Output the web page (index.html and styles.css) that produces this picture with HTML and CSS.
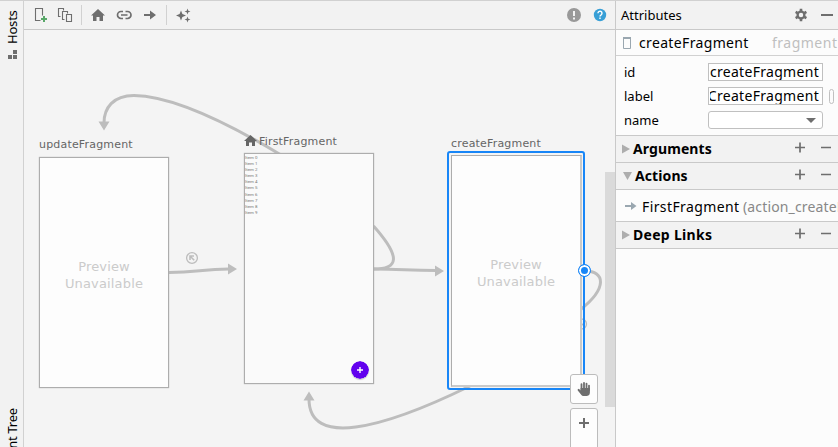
FILE: index.html
```html
<!DOCTYPE html>
<html lang="en">
<head>
<meta charset="utf-8">
<title>Navigation Editor</title>
<link rel="stylesheet" href="styles.css">
</head>
<body>
<div class="app">
  <aside class="rail">
    <div class="rail-tab hosts"><span>Hosts</span></div>
    <svg class="hosts-icon" width="9" height="9" viewBox="0 0 9 9"><path fill="#6e6e6e" d="M5 0h4v4H5zM0 5h4v4H0zM5 5h4v4H5z"/></svg>
    <div class="rail-tab tree"><span>Component Tree</span></div>
  </aside>

  <main class="editor">
    <div class="toolbar">
      <svg width="170" height="28" viewBox="24 1 170 28">
        <g fill="none" stroke="#6e6e6e" stroke-width="1.1">
          <path d="M40.500 20.500h-5v-12h7v7"/>
          <path d="M60.500 16.500h-2v-8h5v2"/>
          <path d="M64.500 19.500h-2v-8h5v2"/>
          <path d="M66.500 14.500h5v7h-5z"/>
        </g>
        <path stroke="#59a869" stroke-width="2" d="M41 19h6M44 16v6"/>
        <path stroke="#d1d1d1" d="M81.500 5v20M166.500 5v20"/>
        <path fill="#6e6e6e" d="M98 9l7 6.500h-2V21h-3.500v-4h-3v4H93v-5.500h-2z"/>
        <g fill="none" stroke="#6e6e6e" stroke-width="1.700">
          <path d="M123 11.500h-2a3.500 3.500 0 0 0 0 7h2M125.500 11.500h2a3.500 3.500 0 0 1 0 7h-2M121 15h6.500"/>
        </g>
        <path fill="#6e6e6e" d="M144 14h6v-3.500l6 4.500-6 4.500V16h-6z"/>
        <path fill="#6e6e6e" d="M181 10.500l1.400 3.600 3.600 1.400-3.600 1.400-1.400 3.600-1.400-3.600-3.600-1.400 3.600-1.400zM187.500 8.500l.8 2.200 2.200.8-2.200.8-.8 2.200-.8-2.200-2.200-.8 2.200-.8zM187.500 16.500l.8 2.200 2.200.8-2.200.8-.8 2.200-.8-2.200-2.200-.8 2.200-.8z"/>
      </svg>
      <svg width="50" height="28" viewBox="565 1 50 28">
        <circle cx="574" cy="15" r="7" fill="#999"/><path fill="#f2f2f2" d="M573 11h2v5h-2zM573 17.500h2v2h-2z"/>
        <circle cx="600" cy="15" r="6.200" fill="#389fd6"/>
        <path fill="none" stroke="#fff" stroke-width="1.400" d="M598 13.300a2 2 0 1 1 3.200 1.500c-.8.500-1.200.8-1.200 1.700M600 17.600v1.500"/>
      </svg>
    </div>

    <div class="canvas">
      <svg class="edges" width="591" height="417" viewBox="24 30 591 417">
        <g fill="none" stroke="#bdbdbd" stroke-width="3">
          <path d="M281 155C213 114 166 96 134 95.500C113 95.500 104 108 104 123"/>
          <path d="M169 272.500C197 272.500 202 269 229 269"/>
          <path d="M374 269C401 269 408 270.500 436 270.500"/>
          <path d="M373.500 226C402 258 398 269 374 269"/>
          <path d="M470 386C380 430 309 447 309 399"/>
          <path d="M585 271C605 271 608 288 580 310"/>
        </g>
        <path fill="#bdbdbd" d="M98.500 121.500h11L104 130.500zM228 263.500v11l9-5.500zM435 265.500v11l9-5.500zM303.500 400.500h11L309 391.500z"/>
        <g fill="none" stroke="#bdbdbd" stroke-width="1.300">
          <circle cx="192" cy="258" r="5.400"/>
          <path stroke-width="1.600" d="M190 260v-4h4M190.200 256.200l4 4"/>
          <circle cx="581.500" cy="324" r="5"/><path d="M581 326l3-3"/>
        </g>
      </svg>

      <div class="node-label update-label">updateFragment</div>
      <div class="node update"><p>Preview<br>Unavailable</p></div>

      <div class="node-label first-label">
        <svg width="14" height="12" viewBox="0 0 14 12"><path fill="#656565" d="M6.500 0l6.500 6h-2v5H8V7.500H5V11H2V6H0z"/></svg><span>FirstFragment</span>
      </div>
      <div class="node first">
        <ul class="items"><li>Item 0</li><li>Item 1</li><li>Item 2</li><li>Item 3</li><li>Item 4</li><li>Item 5</li><li>Item 6</li><li>Item 7</li><li>Item 8</li><li>Item 9</li></ul>
        <svg class="fab" width="18" height="18" viewBox="0 0 18 18"><circle cx="9" cy="9" r="9" fill="#6200ee"/><path stroke="#fff" stroke-width="1.400" d="M6 9h6M9 6v6"/></svg>
      </div>

      <div class="node-label create-label">createFragment</div>
      <div class="selection"></div>
      <div class="node create"><p>Preview<br>Unavailable</p></div>
      <div class="handle"></div>

      <div class="scrollbar"></div>
      <div class="zoom-controls">
        <div class="pan"><svg width="16" height="16" viewBox="0 0 16 16"><path fill="none" stroke="#6e6e6e" stroke-width="1.800" stroke-linecap="round" d="M5.500 9V3.200M8 8V1.800M10.500 8V2.600M13 9V4.600M2.500 8.800l3.500 3.700"/><path fill="#6e6e6e" d="M4.600 7h9.300v4.500q0 3-3 3.500H7.500q-1.500 0-2.500-1.500L2 9.500l1-1.300 1.600 1.300z"/></svg></div>
        <div class="zoom-in"><svg width="10" height="10" viewBox="0 0 10 10"><path stroke="#6e6e6e" stroke-width="2" d="M0 5h10M5 0v10"/></svg></div>
      </div>
    </div>
  </main>

  <aside class="panel">
    <header class="panel-head">
      <span class="t-attributes">Attributes</span>
      <svg width="38" height="14" viewBox="795 8 38 14">
        <circle cx="801" cy="15" r="3.400" fill="none" stroke="#6e6e6e" stroke-width="2.300"/>
        <path stroke="#6e6e6e" stroke-width="2.600" d="M801 8.800v2.400M801 18.800v2.400M795.600 11.900l2.100 1.200M804.300 16.900l2.100 1.200M795.600 18.100l2.100-1.200M804.300 13.100l2.100-1.200"/>
        <path fill="#6e6e6e" d="M821 14h12v2h-12z"/>
      </svg>
    </header>
    <div class="component">
      <svg width="8" height="12" viewBox="0 0 8 12"><path fill="none" stroke="#9aa7b0" d="M.5.5h7v11h-7z"/><path fill="#9aa7b0" d="M0 0h8v2H0z"/></svg>
      <span class="t-component">createFragment</span><span class="t-kind">fragment</span>
    </div>
    <div class="fields">
      <div class="field"><span class="t-id">id</span><div class="input"><span>createFragment</span></div></div>
      <div class="field"><span class="t-label">label</span><div class="input capital"><span>CreateFragment</span></div><i class="pill"></i></div>
      <div class="field"><span class="t-name">name</span><div class="input combo"><svg width="10" height="5" viewBox="0 0 10 5"><path fill="#6e6e6e" d="M0 0h10L5 5z"/></svg></div></div>
    </div>
    <div class="section">
      <svg class="tri" width="11" height="10" viewBox="0 0 11 10"><path fill="#adadad" d="M0 .5v9L8 5z"/></svg>
      <b class="t-arguments">Arguments</b>
      <svg class="ops" width="38" height="11" viewBox="0 0 38 11"><path stroke="#6e6e6e" stroke-width="1.700" d="M0 5.500h10M5 .5v10M26 5.500h10"/></svg>
    </div>
    <div class="section">
      <svg class="tri" width="13" height="10" viewBox="0 0 13 10"><path fill="#adadad" d="M1 1h9L5.500 9z"/></svg>
      <b class="t-actions">Actions</b>
      <svg class="ops" width="38" height="11" viewBox="0 0 38 11"><path stroke="#6e6e6e" stroke-width="1.700" d="M0 5.500h10M5 .5v10M26 5.500h10"/></svg>
    </div>
    <div class="action">
      <svg width="12" height="8" viewBox="0 0 12 8"><path fill="#9aa7b0" d="M0 3h6V0l5.500 4L6 8V5H0z"/></svg>
      <span class="t-target">FirstFragment</span><span class="t-action">(action_createFragment_to_FirstFragment)</span>
    </div>
    <div class="section">
      <svg class="tri" width="11" height="10" viewBox="0 0 11 10"><path fill="#adadad" d="M0 .5v9L8 5z"/></svg>
      <b class="t-links">Deep Links</b>
      <svg class="ops" width="38" height="11" viewBox="0 0 38 11"><path stroke="#6e6e6e" stroke-width="1.700" d="M0 5.500h10M5 .5v10M26 5.500h10"/></svg>
    </div>
  </aside>
</div>
</body>
</html>
```
FILE: styles.css
```css
* { box-sizing: border-box; }
body { margin: 0; overflow: hidden; font-family: "Noto Sans", "Open Sans", sans-serif; font-size: 13px; color: #000; }
svg { display: block; flex: none; }
.app { display: grid; grid-template-columns: 24px 591px 223px; width: 838px; height: 447px; border-top: 1px solid #d1d1d1; overflow: hidden; }

.rail { display: flex; flex-direction: column; align-items: center; background: #f2f2f2; border-right: 1px solid #d1d1d1; height: 446px; overflow: hidden; }
.rail-tab { writing-mode: vertical-rl; transform: rotate(180deg); line-height: 22px; white-space: nowrap; width: 22px; flex: none; }
.hosts { margin-top: 8px; height: 35px; letter-spacing: -.2px; }
.hosts-icon { margin: 6px 0 0 2px; }
.tree { margin-top: 349px; height: 110px; text-align: right; letter-spacing: -.3px; }

.editor { display: flex; flex-direction: column; min-width: 0; }
.toolbar { height: 29px; display: flex; justify-content: space-between; background: #f2f2f2; border-bottom: 1px solid #c9c9c9; flex: none; }
.canvas { position: relative; height: 417px; background: #f4f4f4; overflow: hidden; font-family: "DejaVu Sans", sans-serif; }
.edges { position: absolute; left: 0; top: 0; }
.node-label { position: absolute; font-size: 11px; line-height: 14px; color: #656565; white-space: nowrap; display: flex; letter-spacing: .18px; }
.update-label { left: 15px; top: 108px; }
.first-label { left: 220px; top: 105px; gap: 1px; }
.create-label { left: 427px; top: 107px; }
.node { position: absolute; width: 130px; height: 231px; background: #fdfdfd; border: 1px solid #adadad; box-shadow: 0 0 1px #aaa; display: flex; align-items: center; justify-content: center; }
.node p { margin: 5px 0 0; text-align: center; font-size: 13px; line-height: 17px; color: #cbcbcb; letter-spacing: .15px; }
.update { left: 15px; top: 127px; }
.first { left: 220px; top: 123px; background: #fafafa; }
.create { left: 427px; top: 125px; width: 131px; height: 232px; border-right: 2px solid #cacaca; border-bottom: 2px solid #cacaca; box-shadow: none; }
.selection { position: absolute; left: 423px; top: 121px; width: 138px; height: 239px; border: 2px solid #1886f7; border-radius: 3px; }
.items { position: absolute; left: 0; top: 1px; margin: 0; padding: 0; list-style: none; font: 4.400px/6.100px Roboto, sans-serif; color: #777; }
.fab { position: absolute; right: 4px; bottom: 4px; border-radius: 50%; box-shadow: 0 1px 1px #0003; }
.handle { position: absolute; left: 554px; top: 234px; width: 13px; height: 13px; border-radius: 50%; background: #1886f7; border: 1px solid #1886f7; box-shadow: inset 0 0 0 2px #fff; }
.scrollbar { position: absolute; right: 0; top: 142px; width: 10px; height: 235px; background: #dadada; }
.zoom-controls { position: absolute; left: 546px; top: 344px; display: flex; flex-direction: column; gap: 4px; }
.pan, .zoom-in { width: 28px; height: 30px; background: #fdfdfd; border: 1px solid #bcbcbc; border-radius: 3px; display: flex; align-items: center; justify-content: center; }
.zoom-in { height: 60px; align-items: flex-start; padding-top: 9px; }

.panel { min-width: 0; background: #fcfcfc; border-left: 1px solid #c9c9c9; overflow: hidden; white-space: nowrap; }
.panel-head { height: 29px; display: flex; align-items: center; justify-content: space-between; padding: 0 5px; background: #f2f2f2; border-bottom: 1px solid #c9c9c9; }
.component { height: 26px; display: flex; align-items: center; padding-left: 7px; border-bottom: 1px solid #d1d1d1; font-size: 14px; }
.t-component { margin-left: 8px; width: 133px; flex: none; letter-spacing: .35px; }
.t-kind { color: #bfbfbf; letter-spacing: .5px; }
.fields { height: 80px; padding: 7px 0 0 8px; display: flex; flex-direction: column; gap: 6px; border-bottom: 1px solid #c9c9c9; }
.field { display: flex; align-items: center; height: 18px; }
.field > span { width: 84px; flex: none; }
.input { width: 115px; height: 18px; border: 1px solid #c0c0c0; background: #fff; flex: none; display: flex; align-items: center; justify-content: flex-end; padding-right: 3px; font-size: 14px; line-height: 16px; }
.input span { width: 109px; display: flex; justify-content: flex-end; overflow: hidden; letter-spacing: .3px; }
.combo { border-radius: 3px; padding-right: 6px; }
.pill { width: 5px; height: 15px; border: 1px solid #c0c0c0; border-radius: 3px; margin-left: 6px; }
.section { height: 27px; display: flex; align-items: center; background: #f2f2f2; border-bottom: 1px solid #c9c9c9; padding: 0 5px 0 6px; font-size: 14px; }
.section b { flex: 1; margin-top: -2px; letter-spacing: .1px; }
.section .ops { margin-top: -3px; }
.t-links.t-links { letter-spacing: .3px; }
.action { height: 32px; display: flex; align-items: center; padding: 1px 0 0 9px; border-bottom: 1px solid #c9c9c9; font-size: 14px; }
.t-target { width: 101px; margin-left: 5px; flex: none; letter-spacing: .4px; }
.t-action { color: #888; letter-spacing: .15px; }
```
